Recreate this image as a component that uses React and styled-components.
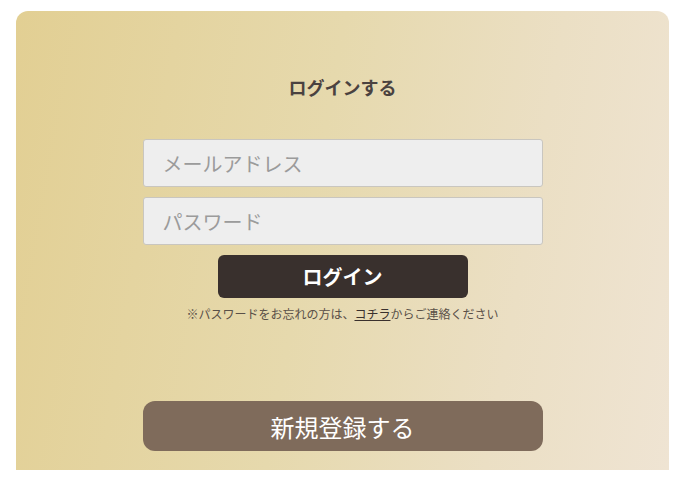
import React from "react";
import styled, { createGlobalStyle } from "styled-components";

const Global = createGlobalStyle`
  html, body { margin: 0; padding: 0; background: #fff; }
  body { font-family: "Noto Sans CJK JP", "Noto Sans", sans-serif; }
  * { box-sizing: border-box; }
`;

const Page = styled.div`
  padding: 11px 0 0 16px;
`;

const Card = styled.div`
  width: 653px;
  height: 459px;
  border-radius: 12px 12px 0 0;
  background: linear-gradient(100deg, #e2cf93 0%, #e6d9ad 45%, #ebdfc4 75%, #efe4d3 100%);
  display: flex;
  flex-direction: column;
  align-items: center;
  padding-top: 63px;
`;

const Title = styled.h1`
  margin: 0 0 38px;
  font-size: 18px;
  line-height: 27px;
  font-weight: 700;
  color: #4a4240;
`;

const Form = styled.form`
  width: 400px;
  display: flex;
  flex-direction: column;
  align-items: center;
  gap: 10px;
`;

const Input = styled.input`
  width: 100%;
  height: 48px;
  border: 1px solid #c9c6bf;
  border-radius: 3px;
  background: #eeeeee;
  padding: 0 19px;
  font-family: inherit;
  font-size: 20px;
  color: #333;
  outline: none;
  &::placeholder { color: #9b9b9b; }
`;

const LoginButton = styled.button`
  width: 250px;
  height: 43px;
  border: none;
  border-radius: 6px;
  background: #39302d;
  color: #fff;
  font-family: inherit;
  font-size: 20px;
  font-weight: 700;
  cursor: pointer;
`;

const Note = styled.p`
  margin: 7px 0 0;
  font-size: 12px;
  line-height: 18px;
  color: #5a5048;
`;

const NoteLink = styled.a`
  color: #3a302d;
  text-decoration: underline;
`;

const RegisterButton = styled.button`
  margin-top: 78px;
  width: 400px;
  height: 50px;
  border: none;
  border-radius: 12px;
  background: #7f6b5b;
  color: #fff;
  font-family: inherit;
  font-size: 24px;
  font-weight: 400;
  cursor: pointer;
`;

export default function App() {
  return (
    <>
      <Global />
      <Page>
        <Card>
          <Title>ログインする</Title>
          <Form onSubmit={(e) => e.preventDefault()}>
            <Input type="email" placeholder="メールアドレス" />
            <Input type="password" placeholder="パスワード" />
            <LoginButton type="submit">ログイン</LoginButton>
          </Form>
          <Note>
            ※パスワードをお忘れの方は、<NoteLink href="#">コチラ</NoteLink>からご連絡ください
          </Note>
          <RegisterButton type="button">新規登録する</RegisterButton>
        </Card>
      </Page>
    </>
  );
}
